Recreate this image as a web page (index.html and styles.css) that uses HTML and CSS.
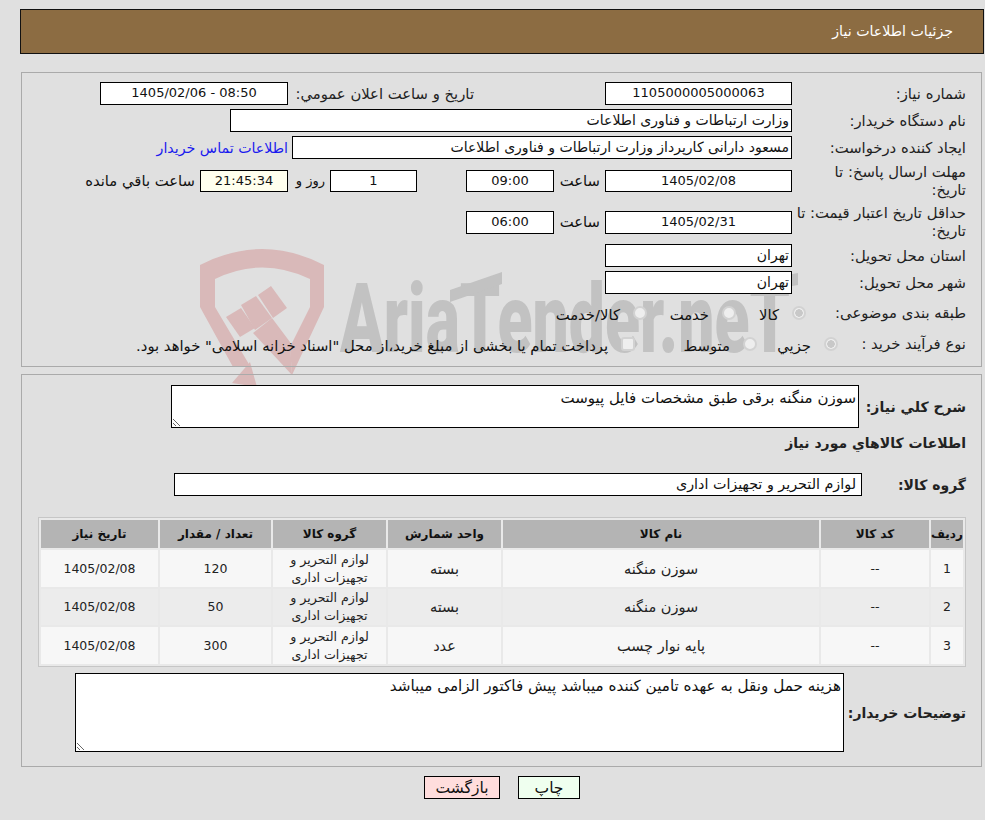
FILE: index.html
```html
<!DOCTYPE html>
<html lang="fa" dir="rtl">
<head>
<meta charset="utf-8">
<title>جزئیات اطلاعات نیاز</title>
<link rel="stylesheet" href="styles.css">
</head>
<body>
<svg class="watermark" width="985" height="400" viewBox="0 0 985 400" aria-hidden="true">
  <g class="wm-red">
    <path d="M200 265Q262 233 324 265L324 307L292 375L290 347L310 307L310 279Q262 256 215 279L215 307L250 366L233 367L200 307Z"/>
    <path d="M272 318L290 342L292 375L253 333Z"/>
    <path d="M226 317L241 308L255 328L240 337Z"/>
    <path d="M241 305L256 296L272 318L255 330Z"/>
    <path d="M258 295L271 286L287 308L273 318Z"/>
    <path d="M250 362L232 383L257 387Z"/>
  </g>
  <g class="wm-grey">
    <text x="340" y="352" class="wm-text" textLength="450" lengthAdjust="spacingAndGlyphs" direction="ltr" text-anchor="start" unicode-bidi="bidi-override">AriaTender.neT</text>
    <path d="M450 290L502 272L502 284L450 302Z"/>
    <path d="M747 282L798 273L798 285L747 294Z"/>
  </g>
</svg>
<div class="page">
  <header class="title">جزئیات اطلاعات نیاز</header>

  <section class="panel panel-info">
    <div class="row">
      <div class="lbl">شماره نیاز:</div>
      <div class="f c n w187">1105000005000063</div>
      <div class="lbl lbl-pub">تاریخ و ساعت اعلان عمومي:</div>
      <div class="f c n w188">08:50 - 1405/02/06</div>
    </div>
    <div class="row">
      <div class="lbl">نام دستگاه خریدار:</div>
      <div class="f r w562">وزارت ارتباطات و فناوری اطلاعات</div>
    </div>
    <div class="row">
      <div class="lbl">ایجاد کننده درخواست:</div>
      <div class="f r w500">مسعود دارانی کارپرداز وزارت ارتباطات و فناوری اطلاعات</div>
      <a class="contact" href="#">اطلاعات تماس خریدار</a>
    </div>
    <div class="row row-tall row-deadline">
      <div class="lbl">مهلت ارسال پاسخ: تا تاریخ:</div>
      <div class="f c n w187 short">1405/02/08</div>
      <div class="txt w51">ساعت</div>
      <div class="f c n w88 short">09:00</div>
      <div class="f c n w87 short ml">1</div>
      <div class="txt w42 days">روز و</div>
      <div class="f c n w88 short clock">21:45:34</div>
      <div class="txt">ساعت باقي مانده</div>
    </div>
    <div class="row row-tall">
      <div class="lbl">حداقل تاریخ اعتبار قیمت: تا تاریخ:</div>
      <div class="f c n w187">1405/02/31</div>
      <div class="txt w51">ساعت</div>
      <div class="f c n w88">06:00</div>
    </div>
    <div class="row">
      <div class="lbl">استان محل تحویل:</div>
      <div class="f r w187">تهران</div>
    </div>
    <div class="row">
      <div class="lbl">شهر محل تحویل:</div>
      <div class="f r w187">تهران</div>
    </div>
    <div class="row row-opts">
      <div class="lbl lbl-cat">طبقه بندی موضوعی:</div>
      <label class="opt w70"><input type="radio" name="cat" disabled checked><span>کالا</span></label>
      <label class="opt w89"><input type="radio" name="cat" disabled><span>خدمت</span></label>
      <label class="opt"><input type="radio" name="cat" disabled><span>کالا/خدمت</span></label>
    </div>
    <div class="row row-opts2">
      <div class="lbl lbl-proc">نوع فرآیند خرید :</div>
      <label class="opt w81"><input type="radio" name="proc" disabled checked><span>جزيي</span></label>
      <label class="opt w122"><input type="radio" name="proc" disabled><span>متوسط</span></label>
      <label class="opt"><input type="checkbox" disabled><span>پرداخت تمام یا بخشی از مبلغ خرید،از محل "اسناد خزانه اسلامی" خواهد بود.</span></label>
    </div>
  </section>

  <section class="panel panel-goods">
    <div class="row row-desc">
      <div class="lbl-b w107">شرح کلي نياز:</div>
      <textarea class="ta ta-desc" readonly>سوزن منگنه برقی طبق مشخصات فایل پیوست</textarea>
    </div>
    <h2 class="lbl-b heading">اطلاعات کالاهاي مورد نياز</h2>
    <div class="row row-group">
      <div class="lbl-b w104">گروه کالا:</div>
      <div class="f r w688 group-val">لوازم التحریر و تجهیزات اداری</div>
    </div>
    <table class="goods">
      <colgroup>
        <col class="c-idx"><col class="c-code"><col class="c-name"><col class="c-unit"><col class="c-group"><col class="c-qty"><col class="c-date">
      </colgroup>
      <thead>
        <tr><th>رديف</th><th>کد کالا</th><th>نام کالا</th><th>واحد شمارش</th><th>گروه کالا</th><th>تعداد / مقدار</th><th>تاریخ نیاز</th></tr>
      </thead>
      <tbody>
        <tr class="h37"><td class="n">1</td><td class="n">--</td><td>سوزن منگنه</td><td>بسته</td><td class="grp">لوازم التحریر و تجهیزات اداری</td><td class="n">120</td><td class="n">1405/02/08</td></tr>
        <tr class="h36"><td class="n">2</td><td class="n">--</td><td>سوزن منگنه</td><td>بسته</td><td class="grp">لوازم التحریر و تجهیزات اداری</td><td class="n">50</td><td class="n">1405/02/08</td></tr>
        <tr class="h37"><td class="n">3</td><td class="n">--</td><td>پایه نوار چسب</td><td>عدد</td><td class="grp">لوازم التحریر و تجهیزات اداری</td><td class="n">300</td><td class="n">1405/02/08</td></tr>
      </tbody>
    </table>
    <div class="row row-notes">
      <div class="lbl-b w122">توضیحات خریدار:</div>
      <textarea class="ta ta-notes" readonly>هزینه حمل ونقل به عهده تامین کننده میباشد پیش فاکتور الزامی میباشد</textarea>
    </div>
  </section>

  <div class="actions">
    <button class="btn btn-print" type="button">چاپ</button>
    <button class="btn btn-back" type="button">بازگشت</button>
  </div>
</div>
</body>
</html>
```
FILE: styles.css
```css
* { box-sizing: border-box; }
html, body { margin: 0; height: 820px; overflow: hidden; }
body {
  background: #e0e0e0;
  color: #111;
  font: 14.8px/18px "DejaVu Sans", sans-serif;
  direction: rtl;
  position: relative;
}
.watermark { position: absolute; left: 0; top: 0; z-index: -1; direction: ltr; }
.wm-red { fill: #d9b9b9; }
.wm-grey { fill: #c2c2c2; }
.wm-text { font: 900 97px Roboto, sans-serif; }

.page { padding: 9px 1px 0 20px; }
.title {
  height: 45px;
  background: #8c6c42;
  border: 1px solid #111;
  color: #fff;
  padding-right: 30px;
  line-height: 43px;
  font-size: 14.2px;
}
.panel { border: 1px solid #aaa; margin: 0 2px 0 1px; padding-right: 15px; }
.panel-info { margin-top: 18px; height: 295px; padding-top: 9px; }
.panel-goods { margin-top: 7px; height: 393px; padding-top: 10px; }

.row { display: flex; align-items: center; margin-bottom: 4px; }
.row-tall { height: 36px; }
.row-deadline { margin-bottom: 5px; }
.row-opts { height: 30px; margin-bottom: 4px; }
.row-opts2 { height: 23px; }

.lbl { width: 174px; flex: none; color: #222; }
.lbl-pub { width: 186px; margin-right: 131px; padding-left: 5px; }
.lbl-cat { width: 160px; }
.lbl-proc { width: 128px; }
.row-deadline .lbl { padding-left: 8px; }

.f {
  height: 23px;
  flex: none;
  background: #fff;
  border: 1px solid #000;
  line-height: 20px;
  color: #111;
  overflow: hidden;
  white-space: nowrap;
  font-size: 14px;
}
.short { height: 22px; }
.c { text-align: center; }
.r { text-align: right; padding-right: 2px; }
.n, .f.n { font-size: 13px; }
.group-val { font-size: 14.3px; padding-right: 5px; }
.clock { background: #ffffee; }
.ml { margin-right: 49px; }
.w187 { width: 187px; }
.w188 { width: 188px; }
.w562 { width: 562px; }
.w500 { width: 500px; }
.w88 { width: 88px; }
.w87 { width: 87px; }
.w688 { width: 688px; }

.txt { padding-right: 5px; flex: none; }
.days { font-size: 13px; }
.w51 { width: 51px; }
.w42 { width: 42px; }
.contact { color: #1a1aee; text-decoration: none; margin-right: 4px; font-size: 14.2px; }

.opt { display: flex; align-items: center; gap: 13px; flex: none; }
.w70 { width: 70px; }
.w89 { width: 89px; }
.w81 { width: 81px; }
.w122 { width: 122px; }
.opt span { position: relative; top: 2px; }
.opt input {
  appearance: none;
  margin: 0;
  width: 14px;
  height: 14px;
  flex: none;
  border: 2px solid #d2d2d2;
  background: #eee;
}
.opt input[type=radio] { border-radius: 50%; }
.opt input[type=checkbox] { border-radius: 3px; }
.opt input:checked { background: radial-gradient(circle, #c8c8c8 0 3.5px, #eee 4px); }

.lbl-b { font-weight: 700; font-size: 14px; color: #222; flex: none; }
.w107 { width: 107px; }
.w104 { width: 104px; }
.w122.lbl-b { width: 122px; }
.heading { margin: 3px 0 18px; height: 24px; line-height: 24px; }
.row-desc { margin-bottom: 0; }
.row-group { margin-bottom: 21px; }
.row-notes { margin: 6px 0 0; }

.ta {
  flex: none;
  display: block;
  border: 1px solid #000;
  border-radius: 0;
  background: #fff;
  color: #111;
  font: 15px/18px "DejaVu Sans", sans-serif;
  padding: 3px 2px 2px;
  margin: 0;
  outline: none;
}
.ta-desc { width: 688px; height: 43px; }
.ta-notes { width: 769px; height: 79px; font-size: 15.2px; }

.goods {
  width: 928px;
  table-layout: fixed;
  border: 1px solid #c6c6c6;
  border-collapse: separate;
  border-spacing: 2px;
  background: #e9e9e9;
  font-size: 14.5px;
  line-height: 18px;
}
.c-idx { width: 32px; }
.c-code { width: 108px; }
.c-name { width: 316px; }
.c-unit { width: 113px; }
.c-group { width: 113px; }
.c-qty { width: 111px; }
.c-date { width: 117px; }
.goods th { height: 28px; background: #b4b4b4; color: #111; font-weight: 700; padding: 0; font-size: 12px; }
.goods td { text-align: center; padding: 0 4px; background: #f7f7f7; color: #222; }
.goods td.n { font-size: 12.5px; }
.goods td.grp { font-size: 12.6px; }
.goods tbody tr:nth-child(even) td { background: #ececec; }
.h37 td { height: 37px; }
.h36 td { height: 36px; }

.actions { display: flex; justify-content: center; gap: 18px; margin-top: 9px; }
.btn {
  height: 23px;
  border: 1px solid #000;
  border-radius: 0;
  color: #111;
  font: 15.5px/18px "DejaVu Sans", sans-serif;
  padding: 0;
}
.btn-print { width: 62px; background: #efffef; }
.btn-back { width: 76px; background: #ffdddd; }
```
